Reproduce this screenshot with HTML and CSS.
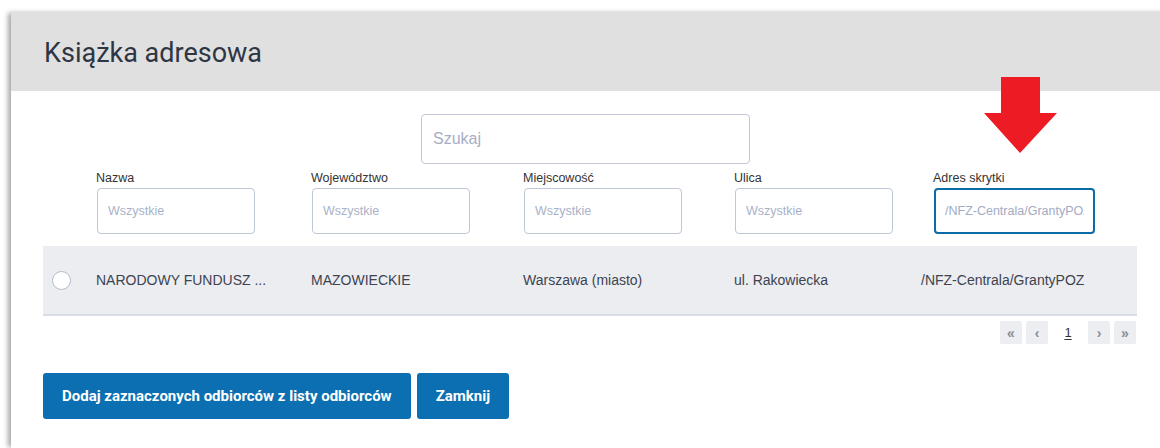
FILE: index.html
```html
<!DOCTYPE html>
<html lang="pl">
<head>
<meta charset="utf-8">
<title>Książka adresowa</title>
<link rel="stylesheet" href="styles.css">
</head>
<body>
<div class="modal">
  <div class="modal-header">
    <h1 class="modal-title">Książka adresowa</h1>
  </div>
  <div class="modal-body">
    <div class="search-row">
      <input class="search-input" type="text" placeholder="Szukaj">
    </div>

    <div class="filters">
      <span></span>
      <label class="filter"><span class="filter-label">Nazwa</span><input class="filter-input" type="text" placeholder="Wszystkie"></label>
      <label class="filter"><span class="filter-label">Województwo</span><input class="filter-input" type="text" placeholder="Wszystkie"></label>
      <label class="filter"><span class="filter-label">Miejscowość</span><input class="filter-input" type="text" placeholder="Wszystkie"></label>
      <label class="filter"><span class="filter-label">Ulica</span><input class="filter-input" type="text" placeholder="Wszystkie"></label>
      <label class="filter"><span class="filter-label">Adres skrytki</span><input class="filter-input filter-input--focus" type="text" value="/NFZ-Centrala/GrantyPOZ"></label>
    </div>

    <div class="table">
      <div class="table-row">
        <span class="radio"></span>
        <span class="cell">NARODOWY FUNDUSZ ...</span>
        <span class="cell">MAZOWIECKIE</span>
        <span class="cell">Warszawa (miasto)</span>
        <span class="cell">ul. Rakowiecka</span>
        <span class="cell">/NFZ-Centrala/GrantyPOZ</span>
      </div>
    </div>

    <div class="pager">
      <span class="pager-btn">&laquo;</span>
      <span class="pager-btn">&lsaquo;</span>
      <span class="pager-num">1</span>
      <span class="pager-btn">&rsaquo;</span>
      <span class="pager-btn">&raquo;</span>
    </div>

    <div class="actions">
      <button class="btn" type="button">Dodaj zaznaczonych odbiorców z listy odbiorców</button>
      <button class="btn" type="button">Zamknij</button>
    </div>
  </div>

  <!-- red pointer arrow over the mailbox filter -->
  <svg class="pointer-arrow" width="76" height="78" viewBox="0 0 76 78">
    <path d="M18 1 H57 V37 H74 L37 77 L1 37 H18 Z" fill="#ed1c24"/>
  </svg>
</div>
</body>
</html>
```

FILE: styles.css
```css
html, body {
  margin: 0;
  padding: 0;
  background: #ffffff;
  overflow: hidden;
}

.modal {
  position: relative;
  margin: 12px 0 0 11px;
  width: 1158px;
  min-height: 436px;
  background: #ffffff;
  box-shadow: -4px 0 5px -1px rgba(0, 0, 0, 0.35);
}

.modal-header {
  height: 79px;
  background: #e0e0e0;
  display: flex;
  align-items: center;
  padding-left: 33px;
}

.modal-title {
  margin: 0;
  font-family: Roboto, "Liberation Sans", sans-serif;
  font-weight: 400;
  font-size: 27px;
  color: #2e3644;
  padding-top: 2px;
}

.modal-body {
  padding: 23px 32px 0 32px;
  font-family: "Liberation Sans", Arial, sans-serif;
}

.search-row {
  padding-left: 378px;
}

.search-input {
  box-sizing: border-box;
  width: 329px;
  height: 50px;
  border: 1px solid #c2c8d8;
  border-radius: 4px;
  padding: 0 11px;
  font-family: "Liberation Sans", Arial, sans-serif;
  font-size: 16px;
  color: #333;
  outline: none;
}

.search-input::placeholder {
  color: #a6aec6;
}

.filters {
  display: grid;
  grid-template-columns: 53px 215px 212px 211px 199px 1fr;
  margin-top: 7px;
}

.filter {
  display: flex;
  flex-direction: column;
}

.filter-label {
  font-size: 12.5px;
  line-height: 14px;
  color: #333333;
  margin-bottom: 3px;
}

.filter-input {
  box-sizing: border-box;
  width: 158px;
  height: 46px;
  margin-left: 1px;
  border: 1px solid #bfc6d8;
  border-radius: 4px;
  padding: 0 10px;
  font-family: "Liberation Sans", Arial, sans-serif;
  font-size: 12.5px;
  color: #a3abc3;
  outline: none;
}

.filter-input::placeholder {
  color: #a9b1c8;
}

.filter-input--focus {
  width: 161px;
  border: 2px solid #0b6aa8;
  padding: 0 9px;
}

.table {
  margin-top: 12px;
}

.table-row {
  display: grid;
  grid-template-columns: 53px 215px 212px 211px 187px 1fr;
  align-items: center;
  height: 68px;
  background: #ebedf1;
  border-bottom: 2px solid #d8dce6;
}

.radio {
  box-sizing: border-box;
  width: 19px;
  height: 19px;
  margin-left: 9px;
  border: 1.5px solid #b3bbcf;
  border-radius: 50%;
  background: #ffffff;
}

.cell {
  font-size: 14px;
  color: #3e4350;
  white-space: nowrap;
}

.pager {
  display: flex;
  justify-content: flex-end;
  align-items: center;
  gap: 4px;
  margin-top: 5px;
  padding-right: 1px;
}

.pager-btn,
.pager-num {
  display: flex;
  align-items: center;
  justify-content: center;
  width: 22px;
  height: 23px;
  background: #eceef2;
  border-radius: 2px;
  font-size: 14px;
  font-weight: 700;
  color: #8a8e98;
}

.pager-num {
  width: 32px;
  background: transparent;
  font-size: 13px;
  font-weight: 400;
  color: #333;
  text-decoration: underline;
  text-underline-offset: 2px;
}

.actions {
  display: flex;
  gap: 6px;
  margin-top: 29px;
}

.btn {
  height: 46px;
  padding: 0 19px;
  border: none;
  border-radius: 3px;
  background: #0b6fb1;
  color: #ffffff;
  font-family: Roboto, "Liberation Sans", sans-serif;
  font-weight: 700;
  font-size: 15px;
  cursor: pointer;
}

.pointer-arrow {
  position: absolute;
  left: 972px;
  top: 64px;
}
```
